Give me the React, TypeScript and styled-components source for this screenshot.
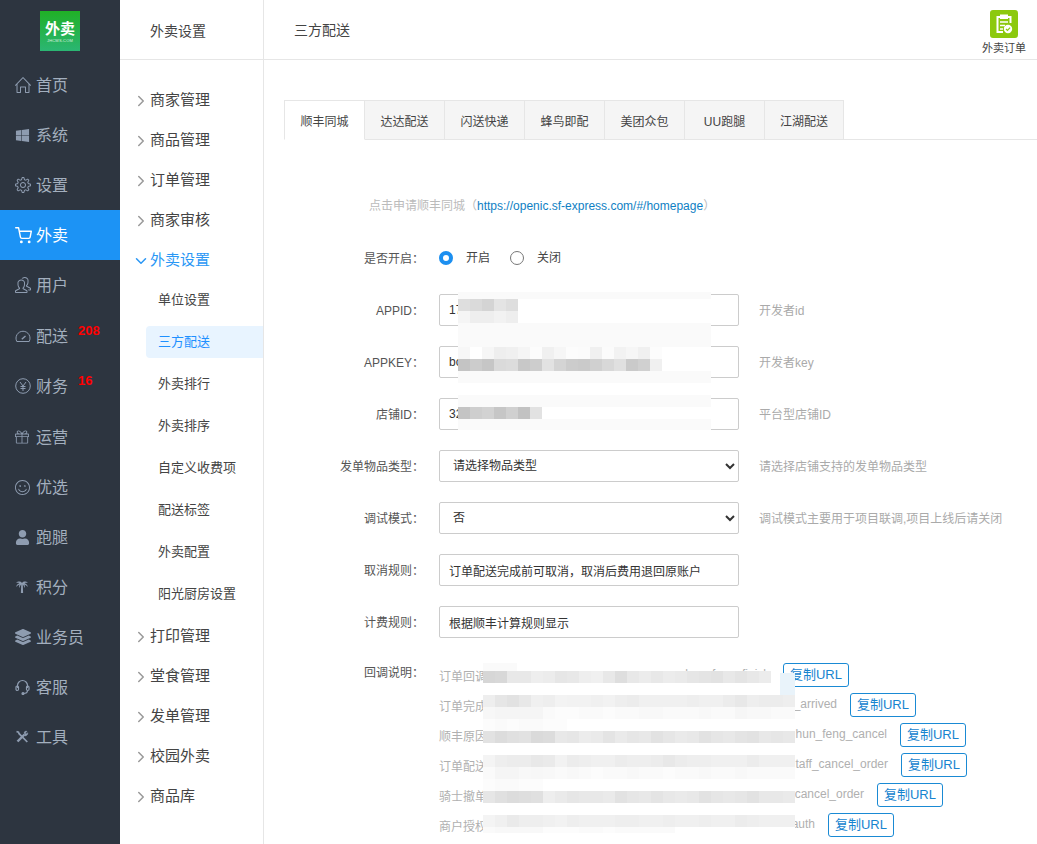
import React from "react";
import styled, { createGlobalStyle } from "styled-components";
import { SlHome, SlSettings, SlPresent, SlEmotsmile, SlPeople } from "react-icons/sl";
import { FaWindows, FaUser, FaLayerGroup } from "react-icons/fa";
import { FiShoppingCart } from "react-icons/fi";
import { LuChevronRight, LuChevronDown } from "react-icons/lu";

const Global = createGlobalStyle`
  html, body { margin: 0; padding: 0; height: 100%; overflow: hidden; background: #fff; }
  * { box-sizing: border-box; }
  body { font-family: "Liberation Sans", "Noto Sans CJK SC", sans-serif; color: #333; }
`;

const Page = styled.div`display: flex; height: 844px; overflow: hidden;`;

const Side = styled.aside`width: 120px; flex: none; background: #2d3540; height: 100%;`;
const LogoWrap = styled.div`height: 60px; display: flex; justify-content: center; padding-top: 11px;`;
const Logo = styled.div`
  width: 40px; height: 40px; background: linear-gradient(#20b026, #2bb673); color: #fff;
  display: flex; flex-direction: column; align-items: center; padding-top: 9px;
`;
const LogoBig = styled.span`font-size: 15px; line-height: 17px; font-weight: 700;`;
const LogoSmall = styled.span`font-size: 4px; line-height: 7px; letter-spacing: .2px; opacity: .8;`;

const NavItem = styled.div<{ $active?: boolean; $h?: number }>`
  position: relative; display: flex; align-items: center; height: ${p => p.$h ?? 50}px; padding-left: 15px;
  padding-bottom: ${p => (p.$h ? 1 : 0)}px;
  font-size: 16px; color: ${p => (p.$active ? "#fff" : "#a3afbe")};
  background: ${p => (p.$active ? "#1c93f5" : "transparent")};
`;
const NavLabel = styled.span`margin-bottom: 2px;`;
const NavIcon = styled.span<{ $active?: boolean }>`
  width: 21px; flex: none; display: flex; justify-content: flex-start; align-items: center;
  color: ${p => (p.$active ? "#fff" : "#8e9cb0")};
`;
const Badge = styled.span`
  position: absolute; left: 78px; top: 12px; font: 700 13px/16px "Liberation Sans", sans-serif; color: #f00;
`;

const Sub = styled.nav`width: 144px; flex: none; border-right: 1px solid #e6e6e6; height: 100%;`;
const SubHead = styled.div`
  height: 60px; border-bottom: 1px solid #e6e6e6; padding-left: 30px; display: flex; align-items: center;
  font-size: 14px; color: #444;
`;
const SubList = styled.div`padding-top: 20px;`;
const Group = styled.div<{ $open?: boolean }>`
  position: relative; height: 40px; display: flex; align-items: center; padding: 0 0 3px 30px; font-size: 15px;
  color: ${p => (p.$open ? "#2a97f5" : "#444")};
`;
const Chevron = styled.span<{ $open?: boolean }>`
  position: absolute; left: 12px; top: 12px; display: flex; color: ${p => (p.$open ? "#2a97f5" : "#999")};
`;
const Leaves = styled.div`padding: 4px 0 6px 26px; display: flex; flex-direction: column; gap: 10px;`;
const Leaf = styled.div<{ $active?: boolean }>`
  height: 32px; line-height: 32px; padding-left: 12px; font-size: 13px; border-radius: 4px 0 0 4px;
  color: ${p => (p.$active ? "#1e90ff" : "#444")};
  background: ${p => (p.$active ? "#e8f4ff" : "transparent")};
`;

const Main = styled.main`flex: 1; position: relative; min-width: 0; height: 100%; overflow: hidden;`;
const Head = styled.header`
  height: 60px; border-bottom: 1px solid #e6e6e6; padding: 0 11px 0 30px;
  display: flex; align-items: center; justify-content: space-between; color: #444;
`;
const HeadTitle = styled.span`font-size: 14px; line-height: 16px;`;
const Shortcut = styled.div`display: flex; flex-direction: column; align-items: center; font-size: 11px; color: #444; line-height: 14px; padding-top: 6px;`;
const ShortIcon = styled.div`
  width: 28px; height: 28px; border-radius: 3px; background: #8cc90e; margin-bottom: 3px;
  display: flex; align-items: center; justify-content: center;
`;

const Content = styled.div`padding: 40px 0 0 20px;`;
const Tabs = styled.div`display: flex; height: 40px; border-bottom: 1px solid #e6e6e6;`;
const Tab = styled.div<{ $active?: boolean }>`
  width: ${p => (p.$active ? 81 : 80)}px; height: 40px; display: flex; align-items: center; justify-content: center; font-size: 12px;
  color: #444; border-top: 1px solid #e6e6e6; border-right: 1px solid #e6e6e6;
  background: ${p => (p.$active ? "#fff" : "#f5f5f5")};
  border-left: ${p => (p.$active ? "1px solid #e6e6e6" : "none")};
  border-bottom: 1px solid ${p => (p.$active ? "#fff" : "#e6e6e6")};
  &:last-child { width: 79px; }
`;
const Form = styled.div`padding-top: 50px; display: flex; flex-direction: column; gap: 20px;`;
const Row = styled.div`display: flex; align-items: center; min-height: 32px;`;
const TopRow = styled(Row)`align-items: flex-start;`;
const Label = styled.label`width: 141px; flex: none; text-align: right; font-size: 12px; color: #555; padding-right: 1px; margin-bottom: 2px;`;
const TopLabel = styled(Label)`padding-top: 7px; line-height: 16px;`;
const Intro = styled.div`padding-left: 85px; font-size: 12px; color: #bbb; line-height: 32px;`;
const LinkText = styled.span`color: #0f7fc4;`;
const Control = styled.div`margin-left: 14px; display: flex; align-items: center;`;
const Input = styled.input`
  width: 300px; height: 32px; border: 1px solid #ccc; border-radius: 2px; padding: 0 9px; font: 12px "Liberation Sans", "Noto Sans CJK SC", sans-serif; color: #333; background: #fff; outline: none;
`;
const Select = styled.select`
  width: 300px; height: 32px; border: 1px solid #ccc; border-radius: 2px; padding: 0 9px; font: 12px "Liberation Sans", "Noto Sans CJK SC", sans-serif; color: #333; background: #fff; outline: none;
`;
const Tip = styled.span`margin: 0 0 2px 20px; font-size: 12px; color: #aaa; white-space: nowrap;`;
const Radio = styled.span<{ $on?: boolean }>`
  width: 14px; height: 14px; border-radius: 50%; flex: none; margin-left: 0;
  border: ${p => (p.$on ? "4.5px solid #1c8ff0" : "1px solid #777")}; background: #fff;
`;
const RadioText = styled.span`font-size: 12px; color: #444; margin: 0 20px 0 13px; line-height: 14px;`;

const Calls = styled.div`margin-left: 14px; display: flex; flex-direction: column; padding-top: 2px;`;
const CallRow = styled.div`height: 30px; display: flex; align-items: center;`;
const CallText = styled.div<{ $w: number }>`
  width: ${p => p.$w}px; display: flex; justify-content: space-between; font-size: 12px; color: #b0b0b0; white-space: nowrap;
`;
const CopyBtn = styled.button`
  width: 66px; height: 24px; padding: 0; background: #fff; border: 1px solid #1a8ad4; border-radius: 3px;
  font: 13px/22px "Liberation Sans", "Noto Sans CJK SC", sans-serif; color: #1784cf;
`;
const CallBtnSlot = styled.div<{ $gap: number }>`margin-left: ${p => p.$gap}px; display: flex;`;

const Mosaic = styled.div<{ $l: number; $t: number; $w: number; $bg?: string }>`
  position: absolute; left: ${p => p.$l}px; top: ${p => p.$t}px; width: ${p => p.$w}px; background: ${p => p.$bg ?? "transparent"};
`;
const MRow = styled.div<{ $h: number; $w?: number; $bg?: string }>`
  display: flex; height: ${p => p.$h}px; width: ${p => (p.$w ? p.$w + "px" : "100%")}; background: ${p => p.$bg ?? "transparent"};
`;
const Cell = styled.span`width: 12px; height: 100%; flex: none;`;
const Patch = styled.div`position: absolute; left: 297px; top: 10px; width: 15px; height: 22px; background: #e9f3fa;`;

const g = (v: number) => `rgb(${v},${v},${v})`;
const Cells = ({ list }: { list: number[] }) => (
  <>{list.map((v, i) => <Cell key={i} style={{ background: g(v) }} />)}</>
);

const GaugeIcon = () => (
  <svg width="16" height="14" viewBox="0 0 16 14" fill="none" stroke="currentColor" strokeWidth="1">
    <path d="M1.800 12.500A7 7 0 1 1 14.200 12.500Z" />
    <path d="M6.800 10.200L10.500 7" strokeWidth="1.400" />
  </svg>
);
const YenIcon = () => (
  <svg width="16" height="16" viewBox="0 0 16 16" fill="none" stroke="currentColor" strokeWidth="1">
    <circle cx="8" cy="8" r="7.300" />
    <path d="M5 4l3 4 3-4M8 8v5M5.500 8.500h5M5.500 10.500h5" />
  </svg>
);
const PalmIcon = () => (
  <svg width="14" height="14" viewBox="0 0 14 14" fill="currentColor">
    <path d="M7 3C5.500 1.200 3 1 1 3c1.500-.3 2.500-.2 3.400.3C2.800 3.600 1.500 5 1.200 7c1-1.300 2-2.200 3.300-2.600C4 5.600 4 6.800 4.600 8c.2-1.500.7-2.700 1.600-3.500L5.900 13h2.200L7.800 4.500c.9.800 1.400 2 1.600 3.500.6-1.200.6-2.400.1-3.600 1.300.4 2.300 1.300 3.300 2.600-.3-2-1.600-3.400-3.200-3.700.9-.5 1.900-.6 3.400-.3C11 1 8.500 1.200 7 3z" />
  </svg>
);
const HeadsetIcon = () => (
  <svg width="15" height="16" viewBox="0 0 15 16" fill="none" stroke="currentColor" strokeWidth="1.200">
    <path d="M2.500 9V6.500a5 5 0 0 1 10 0V9" />
    <rect x="1" y="7" width="2.500" height="4.500" rx="1.200" />
    <rect x="11.500" y="7" width="2.500" height="4.500" rx="1.200" />
    <path d="M12.500 11.500c0 2-2 3-4 3" />
    <circle cx="8" cy="14.500" r="1" fill="currentColor" />
  </svg>
);
const ToolsIcon = () => (
  <svg width="14" height="14" viewBox="0 0 14 14" fill="none" stroke="currentColor">
    <path d="M2.500 11.500L9.500 4.500" strokeWidth="2.400" />
    <path d="M1.500 1.500l2 .7.6 1.500 8.200 8.300" strokeWidth="1.700" />
    <path d="M9 2.500a2.800 2.800 0 0 1 3-1.300L10.500 3l.5 1 1.800-1.300A2.800 2.800 0 0 1 10 6z" fill="currentColor" strokeWidth=".4" />
  </svg>
);

const navs: { t: string; i: React.ReactNode; a?: boolean; b?: string; h?: number }[] = [
  { t: "首页", i: <SlHome size={16} /> },
  { t: "系统", i: <FaWindows size={15} /> },
  { t: "设置", i: <SlSettings size={16} /> },
  { t: "外卖", i: <FiShoppingCart size={17} />, a: true },
  { t: "用户", i: <SlPeople size={16} />, h: 51 },
  { t: "配送", i: <GaugeIcon />, b: "208" },
  { t: "财务", i: <YenIcon />, b: "16", h: 51 },
  { t: "运营", i: <SlPresent size={14} /> },
  { t: "优选", i: <SlEmotsmile size={15} /> },
  { t: "跑腿", i: <FaUser size={15} /> },
  { t: "积分", i: <PalmIcon /> },
  { t: "业务员", i: <FaLayerGroup size={16} /> },
  { t: "客服", i: <HeadsetIcon /> },
  { t: "工具", i: <ToolsIcon /> },
];
const before = ["商家管理", "商品管理", "订单管理", "商家审核"];
const leaves = ["单位设置", "三方配送", "外卖排行", "外卖排序", "自定义收费项", "配送标签", "外卖配置", "阳光厨房设置"];
const after = ["打印管理", "堂食管理", "发单管理", "校园外卖", "商品库"];
const tabs = ["顺丰同城", "达达配送", "闪送快递", "蜂鸟即配", "美团众包", "UU跑腿", "江湖配送"];
const calls = [
  { l: "订单回调", e: "shun_feng_finish", w: 331, g: 13 },
  { l: "订单完成", e: "_arrived", w: 398, g: 13 },
  { l: "顺丰原因", e: "hun_feng_cancel", w: 448, g: 13 },
  { l: "订单配送", e: "taff_cancel_order", w: 449, g: 13 },
  { l: "骑士撤单", e: "cancel_order", w: 425, g: 13 },
  { l: "商户授权", e: "auth", w: 376, g: 13 },
];

const Arrow = ({ open }: { open?: boolean }) => (
  <Chevron $open={open}>{open ? <LuChevronDown size={18} /> : <LuChevronRight size={18} />}</Chevron>
);

export default function App() {
  return (
    <Page>
      <Global />
      <Side>
        <LogoWrap>
          <Logo>
            <LogoBig>外卖</LogoBig>
            <LogoSmall>JHCMS.COM</LogoSmall>
          </Logo>
        </LogoWrap>
        {navs.map(n => (
          <NavItem key={n.t} $active={n.a} $h={n.h}>
            <NavIcon $active={n.a}>{n.i}</NavIcon>
            <NavLabel>{n.t}</NavLabel>
            {n.b && <Badge>{n.b}</Badge>}
          </NavItem>
        ))}
      </Side>
      <Sub>
        <SubHead>外卖设置</SubHead>
        <SubList>
          {before.map(t => <Group key={t}><Arrow />{t}</Group>)}
          <Group $open><Arrow open />外卖设置</Group>
          <Leaves>
            {leaves.map(t => <Leaf key={t} $active={t === "三方配送"}>{t}</Leaf>)}
          </Leaves>
          {after.map(t => <Group key={t}><Arrow />{t}</Group>)}
        </SubList>
      </Sub>
      <Main>
        <Head>
          <HeadTitle>三方配送</HeadTitle>
          <Shortcut>
            <ShortIcon>
              <svg width="18" height="20" viewBox="0 0 18 20" fill="none" stroke="#fff" strokeWidth="2">
                <path d="M5 3H2.500v15H8M13 3h2.500v6" />
                <rect x="5.500" y="1" width="7" height="3.500" fill="#fff" strokeWidth="1" />
                <path d="M5 8h8M5 11.500h5M5 15h3" strokeWidth="1.600" />
                <circle cx="13" cy="15" r="4.200" fill="#fff" stroke="none" />
                <path d="M11 15l1.500 1.500 2.600-2.800" stroke="#8cc90e" strokeWidth="1.200" />
              </svg>
            </ShortIcon>
            外卖订单
          </Shortcut>
        </Head>
        <Content>
          <Tabs>
            {tabs.map((t, i) => <Tab key={t} $active={i === 0}>{t}</Tab>)}
          </Tabs>
          <Form>
            <Intro>点击申请顺丰同城（<LinkText>https://openic.sf-express.com/#/homepage</LinkText>）</Intro>
            <Row>
              <Label>是否开启：</Label>
              <Control>
                <Radio $on /><RadioText>开启</RadioText>
                <Radio /><RadioText>关闭</RadioText>
              </Control>
            </Row>
            <Row><Label>APPID：</Label><Control><Input readOnly value="17" /></Control><Tip>开发者id</Tip></Row>
            <Row><Label>APPKEY：</Label><Control><Input readOnly value="bc" /></Control><Tip>开发者key</Tip></Row>
            <Row><Label>店铺ID：</Label><Control><Input readOnly value="32" /></Control><Tip>平台型店铺ID</Tip></Row>
            <Row>
              <Label>发单物品类型：</Label>
              <Control><Select defaultValue="0"><option value="0">请选择物品类型</option></Select></Control>
              <Tip>请选择店铺支持的发单物品类型</Tip>
            </Row>
            <Row>
              <Label>调试模式：</Label>
              <Control><Select defaultValue="0"><option value="0">否</option></Select></Control>
              <Tip>调试模式主要用于项目联调,项目上线后请关闭</Tip>
            </Row>
            <Row><Label>取消规则：</Label><Control><Input readOnly value="订单配送完成前可取消，取消后费用退回原账户" /></Control></Row>
            <Row><Label>计费规则：</Label><Control><Input readOnly value="根据顺丰计算规则显示" /></Control></Row>
            <TopRow>
              <TopLabel>回调说明：</TopLabel>
              <Calls>
                {calls.map(c => (
                  <CallRow key={c.l}>
                    <CallText $w={c.w}><span>{c.l}</span><span>{c.e}</span></CallText>
                    <CallBtnSlot $gap={c.g}><CopyBtn>复制URL</CopyBtn></CallBtnSlot>
                  </CallRow>
                ))}
              </Calls>
            </TopRow>
          </Form>
        </Content>

        <Mosaic $l={194} $t={292} $w={253} $bg="#fafafa">
          <MRow $h={7} />
          <MRow $h={12} $bg="#fff"><Cells list={[222, 218, 212, 228, 222]} /></MRow>
          <MRow $h={12} $bg="#fff"><Cells list={[245, 238, 238, 242, 238]} /></MRow>
          <MRow $h={24} />
          <MRow $h={12} $bg="#fff"><Cells list={[247, 255, 246, 238, 240, 245, 252, 240, 246, 252, 251, 240, 251, 242, 246, 240, 252]} /></MRow>
          <MRow $h={12} $bg="#fff"><Cells list={[196, 204, 198, 218, 220, 200, 205, 226, 212, 204, 202, 208, 216, 224, 202, 208, 240]} /></MRow>
          <MRow $h={12} />
          <MRow $h={12} $bg="#fff" />
          <MRow $h={12} />
          <MRow $h={12} $bg="#fff"><Cells list={[196, 206, 210, 198, 208, 194, 226]} /></MRow>
          <MRow $h={11} />
        </Mosaic>

        <Mosaic $l={219} $t={663} $w={312}>
          <MRow $h={8} $w={34} $bg="#fafafa" />
          <MRow $h={12} $w={297} $bg="#fff">
            <Cells list={[214, 216, 232, 232, 238, 236, 230, 232, 238, 240, 232, 222, 232, 236, 232, 236, 234, 230, 228, 226, 232, 228, 232, 236]} />
          </MRow>
          <Patch />
          <MRow $h={12} $w={297} $bg="#fff" />
          <MRow $h={12} $bg="#fff"><Cells list={[238, 230, 226, 232, 240, 238, 243, 242, 242, 240, 242, 238, 236, 240, 240, 240, 240, 238, 240, 240, 236, 232, 238, 236, 236, 238]} /></MRow>
          <MRow $h={12} $bg="#fff"><Cells list={[247, 245, 245, 245, 245, 250, 252, 252, 250, 250, 252, 250, 250, 248, 248, 250, 250, 250, 248, 250, 250, 246, 248, 248, 250, 250]} /></MRow>
          <MRow $h={12} $bg="#fff"><Cells list={[252, 250, 252, 250, 250, 252, 252, 255, 255, 255, 255, 255, 255, 255, 255, 255, 255, 255, 255, 255, 255, 255, 255, 255, 255, 255]} /></MRow>
          <MRow $h={12} $bg="#fff"><Cells list={[226, 220, 224, 226, 218, 220, 232, 230, 236, 234, 228, 234, 230, 232, 226, 230, 234, 232, 226, 230, 232, 228, 226, 232, 230, 232]} /></MRow>
          <MRow $h={12} $bg="#fff" />
          <MRow $h={12} $bg="#fff"><Cells list={[244, 238, 236, 236, 232, 234, 242, 236, 238, 240, 240, 236, 238, 238, 236, 232, 236, 238, 238, 240, 240, 240, 236, 240, 240, 240]} /></MRow>
          <MRow $h={12} $bg="#fff"><Cells list={[250, 245, 245, 248, 247, 248, 250, 248, 250, 252, 250, 250, 248, 250, 250, 252, 250, 250, 248, 250, 250, 248, 250, 250, 250, 250]} /></MRow>
          <MRow $h={12} $bg="#fff"><Cells list={[252, 250, 250, 252, 252, 255, 255, 255, 255, 255, 255, 255, 255, 255, 255, 255, 255, 255, 255, 255, 255, 255, 255, 255, 255, 255]} /></MRow>
          <MRow $h={12} $bg="#fff"><Cells list={[230, 224, 220, 222, 224, 238, 234, 230, 232, 232, 234, 226, 230, 232, 228, 232, 234, 232, 226, 230, 232, 230, 226, 232, 232, 234]} /></MRow>
          <MRow $h={12} $bg="#fff" />
          <MRow $h={12} $bg="#fff"><Cells list={[244, 240, 234, 238, 238, 240, 242, 238, 240, 240, 240, 238, 238, 240, 240, 238, 240, 240, 238, 240, 240, 236, 238, 240, 240, 240]} /></MRow>
          <MRow $h={6} $bg="#fff"><Cells list={[250, 248, 248, 248, 248, 252, 252, 252, 250, 250, 252, 250, 250, 250, 250, 250, 255, 255, 255, 255, 255, 255, 255, 255, 255, 255]} /></MRow>
        </Mosaic>
      </Main>
    </Page>
  );
}
